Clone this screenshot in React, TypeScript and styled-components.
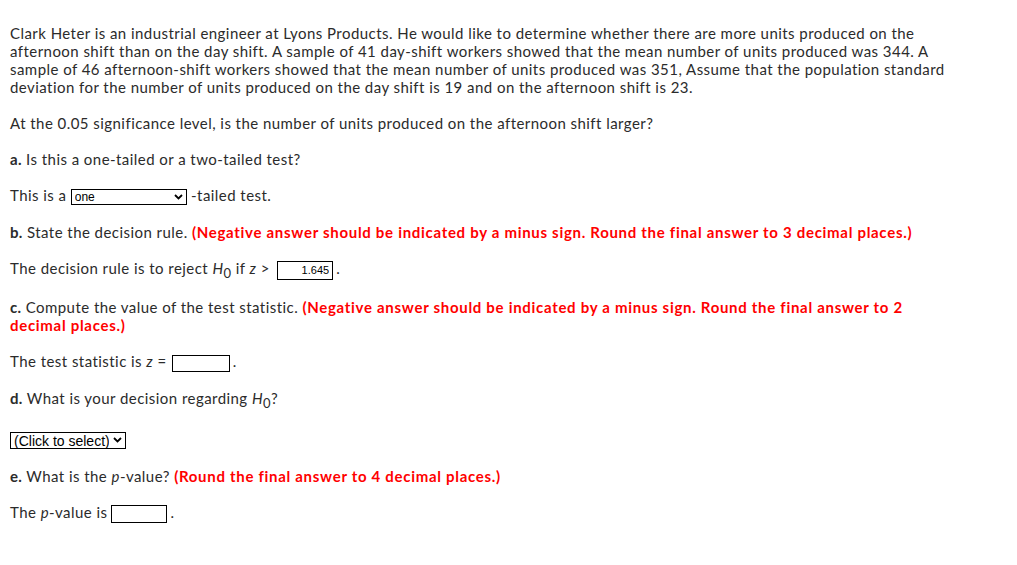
import React from "react";
import styled, { createGlobalStyle } from "styled-components";

const GlobalStyle = createGlobalStyle`
  html, body {
    margin: 0;
    padding: 0;
    background: #ffffff;
  }
  body {
    font-family: "Lato", "Liberation Sans", Arial, sans-serif;
    font-size: 15px;
    letter-spacing: 0.45px;
    color: #2b2b2b;
  }
`;

const Page = styled.div`
  padding: 24px 10px 0 10px;
  width: 940px;
`;

const Para = styled.p<{ $top?: number }>`
  margin: 0 0 18px 0;
  padding-top: ${(p) => p.$top ?? 0}px;
  line-height: 18px;
`;

const Letter = styled.b`
  font-weight: 700;
  letter-spacing: 0.3px;
`;

const Note = styled.span`
  color: #ff0000;
  font-weight: 700;
  letter-spacing: 0.7px;
`;

const Em = styled.i`
  font-style: italic;
`;

const Sub = styled.sub`
  font-size: 13px;
  vertical-align: -4px;
  line-height: 0;
`;

const SelectWrap = styled.span<{ $w: number }>`
  position: relative;
  display: inline-block;
  width: ${(p) => p.$w}px;
  vertical-align: middle;
  letter-spacing: 0;
`;

const Select = styled.select<{ $size: number; $h: number }>`
  appearance: none;
  -webkit-appearance: none;
  display: block;
  width: 100%;
  height: ${(p) => p.$h}px;
  border: 1px solid #000;
  border-radius: 0;
  background: #fff;
  color: #000;
  font-family: "Liberation Sans", Arial, sans-serif;
  font-size: ${(p) => p.$size}px;
  padding: 0 16px 0 3px;
  margin: 0;
  outline: none;
  box-sizing: border-box;
`;

const Chevron = styled.svg`
  position: absolute;
  right: 4px;
  top: 50%;
  width: 9px;
  height: 6px;
  margin-top: -3px;
  pointer-events: none;
`;

const Box = styled.input<{ $w: number; $h: number; $ml?: number }>`
  width: ${(p) => p.$w}px;
  height: ${(p) => p.$h}px;
  box-sizing: border-box;
  border: 1px solid #000;
  border-radius: 0;
  padding: 0 3px;
  margin: -2px 3px -2px ${(p) => p.$ml ?? 3}px;
  font-family: "Liberation Sans", Arial, sans-serif;
  font-size: 11px;
  letter-spacing: 0;
  color: #000;
  text-align: right;
  vertical-align: middle;
  outline: none;
`;

function Dropdown({ value, w, h, size }: { value: string; w: number; h: number; size: number }) {
  return (
    <SelectWrap $w={w}>
      <Select $size={size} $h={h} defaultValue={value}>
        <option value={value}>{value}</option>
      </Select>
      <Chevron viewBox="0 0 9 6">
        <path d="M1 1 L4.5 4.5 L8 1" fill="none" stroke="#000" strokeWidth="1.8" />
      </Chevron>
    </SelectWrap>
  );
}

function H0() {
  return (
    <>
      <Em>H</Em>
      <Sub>0</Sub>
    </>
  );
}

export default function App() {
  return (
    <>
      <GlobalStyle />
      <Page>
        <Para>
          Clark Heter is an industrial engineer at Lyons Products. He would like to determine whether there are more units produced on the
          afternoon shift than on the day shift. A sample of 41 day-shift workers showed that the mean number of units produced was 344. A
          sample of 46 afternoon-shift workers showed that the mean number of units produced was 351, Assume that the population standard
          deviation for the number of units produced on the day shift is 19 and on the afternoon shift is 23.
        </Para>
        <Para>At the 0.05 significance level, is the number of units produced on the afternoon shift larger?</Para>
        <Para>
          <Letter>a.</Letter> Is this a one-tailed or a two-tailed test?
        </Para>
        <Para>
          This is a <Dropdown value="one" w={116} h={16} size={12} /> -tailed test.
        </Para>
        <Para>
          <Letter>b.</Letter> State the decision rule.{" "}
          <Note>(Negative answer should be indicated by a minus sign. Round the final answer to 3 decimal places.)</Note>
        </Para>
        <Para>
          The decision rule is to reject <H0 /> if <Em>z</Em> &gt; <Box $w={56} $h={19} defaultValue="1.645" readOnly />.
        </Para>
        <Para $top={2}>
          <Letter>c.</Letter> Compute the value of the test statistic.{" "}
          <Note>(Negative answer should be indicated by a minus sign. Round the final answer to 2 decimal places.)</Note>
        </Para>
        <Para>
          The test statistic is <Em>z</Em> =<Box $w={58} $h={17} $ml={5} />.
        </Para>
        <Para $top={1}>
          <Letter>d.</Letter> What is your decision regarding <H0 />?
        </Para>
        <Para $top={4}>
          <Dropdown value="(Click to select)" w={116} h={17} size={14} />
        </Para>
        <Para>
          <Letter>e.</Letter> What is the <Em>p</Em>-value? <Note>(Round the final answer to 4 decimal places.)</Note>
        </Para>
        <Para>
          The <Em>p</Em>-value is<Box $w={56} $h={18} $ml={4} />.
        </Para>
      </Page>
    </>
  );
}
